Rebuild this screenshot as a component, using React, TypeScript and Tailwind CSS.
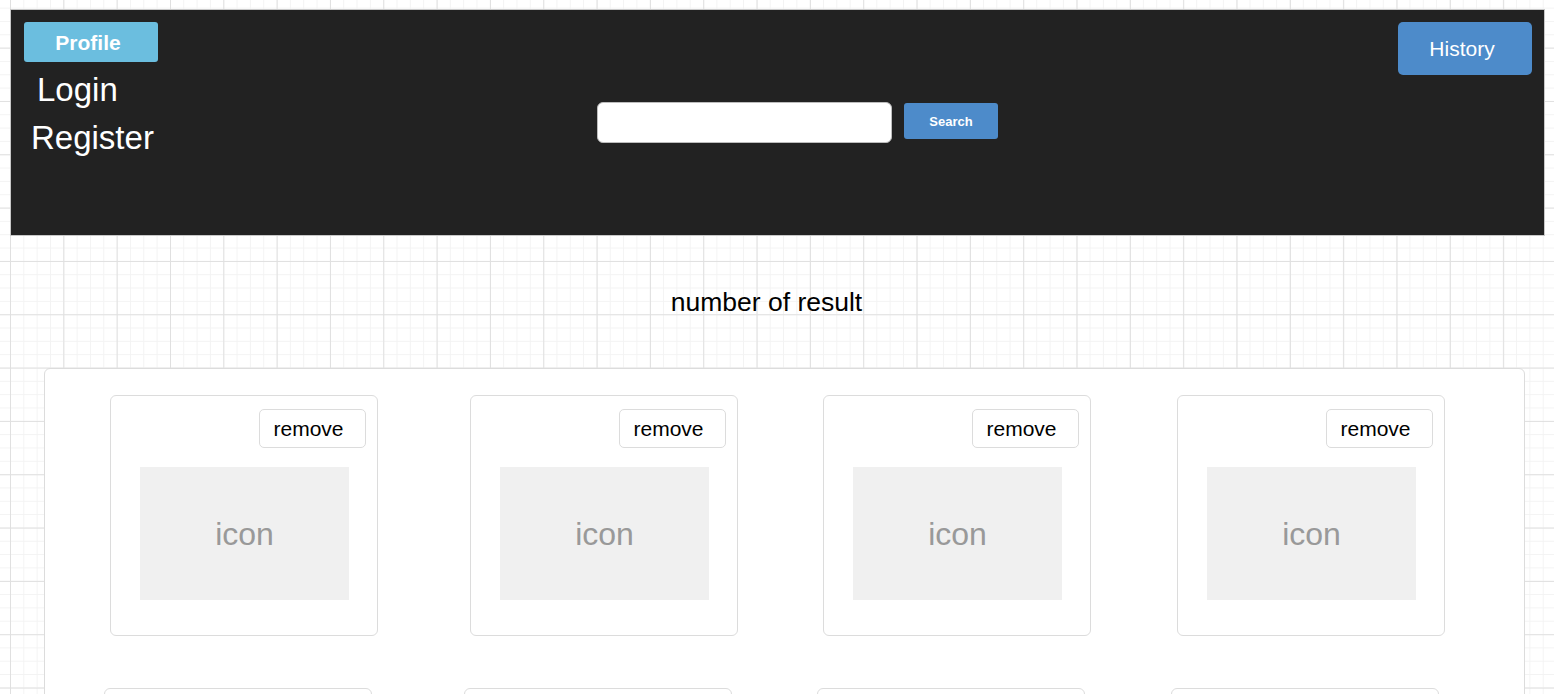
import React from 'react';

const font = { fontFamily: '"Liberation Sans", Arial, Helvetica, sans-serif' };

const rowGaps = ['', 'ml-[92px]', 'ml-[85px]', 'ml-[86px]'];

const ResultCard: React.FC<{ gap: string }> = ({ gap }) => (
  <div className={`${gap} w-[268px] h-[241px] shrink-0 bg-white border border-[#dcdcdc] rounded-[6px] flex flex-col`}>
    <div className="flex justify-end pt-[13px] pr-[11px]">
      <button className="w-[107px] h-[39px] bg-white border border-[#dcdcdc] rounded-[5px] text-[21px] text-black leading-none pr-[8px]">
        remove
      </button>
    </div>
    <div className="mt-[19px] ml-[29px] w-[209px] h-[133px] bg-[#f0f0f0] flex items-center justify-center">
      <span className="text-[32px] text-[#999999] leading-none">icon</span>
    </div>
  </div>
);

const App: React.FC = () => {
  return (
    <div
      style={font}
      className="min-h-screen w-full overflow-hidden bg-white bg-[linear-gradient(to_right,#e0e0e0_1px,transparent_1px),linear-gradient(to_bottom,#e0e0e0_1px,transparent_1px),linear-gradient(to_right,#f3f3f3_1px,transparent_1px),linear-gradient(to_bottom,#f3f3f3_1px,transparent_1px)] bg-[size:53.33px_53.33px,53.33px_53.33px,13.33px_13.33px,13.33px_13.33px] bg-[position:10px_-5.7px,10px_-5.7px,10px_-5.7px,10px_-5.7px] pt-[9px]"
    >
      {/* Header */}
      <div className="ml-[10px] w-[1535px] h-[227px] bg-[#222222] border border-[#c8c8c8] flex items-start pt-[12px] pl-[13px] pr-[12px]">
        <div className="w-[134px] shrink-0 flex flex-col">
          <button className="w-[134px] h-[40px] bg-[#6bbedf] rounded-[3px] text-white font-bold text-[21px] leading-none pr-[6px]">
            Profile
          </button>
          <span className="mt-[8px] pl-[13px] text-white text-[33px] leading-[40px]">Login</span>
          <span className="mt-[8px] pl-[7px] text-white text-[33px] leading-[40px] whitespace-nowrap">Register</span>
        </div>

        <div className="ml-[439px] mt-[80px] flex items-start">
          <input
            type="text"
            className="w-[295px] h-[41px] bg-white rounded-[6px] border border-[#bdbdbd] outline-none px-2"
          />
          <button className="ml-[12px] mt-[1px] w-[94px] h-[36px] bg-[#4d8bca] rounded-[3px] text-white font-bold text-[13px] leading-none">
            Search
          </button>
        </div>

        <button className="ml-auto w-[134px] h-[53px] bg-[#4d8bca] rounded-[5px] text-white text-[21px] leading-none pr-[6px]">
          History
        </button>
      </div>

      {/* Result count */}
      <div className="h-[132px] flex items-center justify-center pr-[21px]">
        <span className="text-[26.5px] text-black leading-none">number of result</span>
      </div>

      {/* Results */}
      <div className="ml-[44px] w-[1481px] bg-white border border-[#dcdcdc] rounded-[6px] pt-[26px] pb-[40px]">
        <div className="flex pl-[65px]">
          {rowGaps.map((g, i) => (
            <ResultCard key={i} gap={g} />
          ))}
        </div>
        <div className="flex pl-[59px] mt-[52px]">
          {rowGaps.map((g, i) => (
            <ResultCard key={i} gap={g} />
          ))}
        </div>
      </div>
    </div>
  );
};

export default App;
